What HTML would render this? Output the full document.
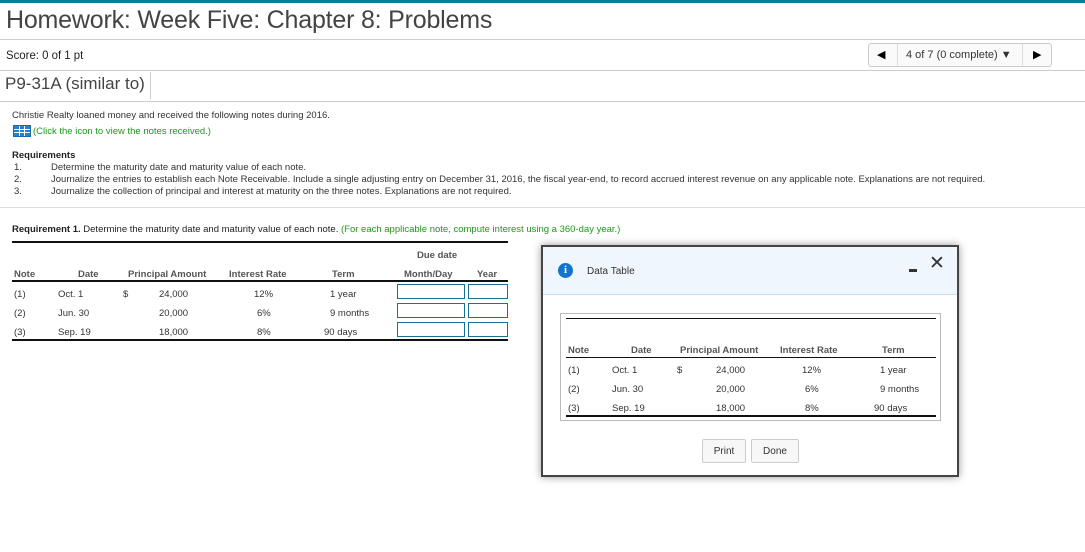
<!DOCTYPE html>
<html><head><style>
*{margin:0;padding:0;box-sizing:border-box}
body{width:1085px;height:552px;background:#fff;font-family:"Liberation Sans",Arial,sans-serif;color:#333;position:relative;overflow:hidden}
.a{position:absolute;white-space:nowrap}
.s{font-size:9.5px}
.hl{position:absolute;height:1px;background:#c8cdd8}
.bl{position:absolute;height:2px;background:#111}
.in{position:absolute;height:15px;border:1.5px solid #1b6f8f;background:#fff}
.b{font-weight:bold}
.btn{position:absolute;height:24px;border:1px solid #ccc;border-radius:2px;background:#f7f7f7;font-size:10px;display:flex;align-items:center;justify-content:center}
</style></head><body>
<div class="a" style="left:0;top:0;width:1085px;height:3px;background:#0e7ea0"></div>
<div class="a" style="left:6px;top:6px;font-size:25px;color:#444;letter-spacing:-0.2px">Homework: Week Five: Chapter 8: Problems</div>
<div class="hl" style="left:0;top:39px;width:1085px"></div>
<div class="a" style="left:6px;top:48px;font-size:12px;color:#222;transform:scaleX(0.95);transform-origin:left">Score: 0 of 1 pt</div>
<div class="a" style="left:868px;top:43px;width:184px;height:24px;border:1px solid #ccc;border-radius:3px;background:#fafafa"></div>
<div class="a" style="left:897px;top:44px;width:1px;height:22px;background:#ddd"></div>
<div class="a" style="left:1022px;top:44px;width:1px;height:22px;background:#ddd"></div>
<div class="a" style="left:877px;top:48px;font-size:11px;color:#000">◀</div>
<div class="a" style="left:906px;top:49px;font-size:11px;color:#333">4 of 7 (0 complete) ▼</div>
<div class="a" style="left:1033px;top:48px;font-size:11px;color:#000">▶</div>
<div class="hl" style="left:0;top:70px;width:1085px"></div>
<div class="a" style="left:5px;top:74px;font-size:17px;color:#444">P9-31A (similar to)</div>
<div class="a" style="left:150px;top:72px;width:1px;height:27px;background:#ccc"></div>
<div class="hl" style="left:0;top:101px;width:1085px"></div>
<div class="a s" style="left:12px;top:110px">Christie Realty loaned money and received the following notes during 2016.</div>
<div class="a" style="left:13px;top:125px;width:18px;height:12px;background:#2a7fd4;border:1px solid #1f66b0"><svg width="16" height="10" style="position:absolute;left:0;top:0"><g stroke="#fff" stroke-width="1"><line x1="5.5" y1="0" x2="5.5" y2="10"/><line x1="10.5" y1="0" x2="10.5" y2="10"/><line x1="0" y1="3.5" x2="16" y2="3.5"/><line x1="0" y1="6.5" x2="16" y2="6.5"/></g></svg></div>
<div class="a s" style="left:33px;top:126px;color:#1a9a1a">(Click the icon to view the notes received.)</div>
<div class="a s b" style="left:12px;top:150px;color:#222">Requirements</div>
<div class="a s" style="left:14px;top:162px">1.</div><div class="a s" style="left:51px;top:162px">Determine the maturity date and maturity value of each note.</div>
<div class="a s" style="left:14px;top:174px">2.</div><div class="a s" style="left:51px;top:174px">Journalize the entries to establish each Note Receivable. Include a single adjusting entry on December 31, 2016, the fiscal year-end, to record accrued interest revenue on any applicable note. Explanations are not required.</div>
<div class="a s" style="left:14px;top:186px">3.</div><div class="a s" style="left:51px;top:186px">Journalize the collection of principal and interest at maturity on the three notes. Explanations are not required.</div>
<div class="hl" style="left:0;top:207px;width:1085px;background:#ddd"></div>
<div class="a s" style="left:12px;top:224px;color:#222"><b>Requirement 1.</b> Determine the maturity date and maturity value of each note. <span style="color:#1a9a1a">(For each applicable note, compute interest using a 360-day year.)</span></div>
<div class="bl" style="left:12px;top:241px;width:496px"></div>
<div class="a s b" style="left:417px;top:250px;color:#555">Due date</div>
<div class="a s b" style="left:14px;top:269px;color:#555">Note</div>
<div class="a s b" style="left:78px;top:269px;color:#555">Date</div>
<div class="a s b" style="left:128px;top:269px;color:#555">Principal Amount</div>
<div class="a s b" style="left:229px;top:269px;color:#555">Interest Rate</div>
<div class="a s b" style="left:332px;top:269px;color:#555">Term</div>
<div class="a s b" style="left:404px;top:269px;color:#555">Month/Day</div>
<div class="a s b" style="left:477px;top:269px;color:#555">Year</div>
<div class="bl" style="left:12px;top:280px;width:496px;height:1.5px"></div>
<div class="a s" style="left:14px;top:289px">(1)</div><div class="a s" style="left:58px;top:289px">Oct. 1</div><div class="a s" style="left:123px;top:289px">$</div><div class="a s" style="left:159px;top:289px">24,000</div><div class="a s" style="left:254px;top:289px">12%</div><div class="a s" style="left:330px;top:289px">1 year</div>
<div class="a s" style="left:14px;top:308px">(2)</div><div class="a s" style="left:58px;top:308px">Jun. 30</div><div class="a s" style="left:159px;top:308px">20,000</div><div class="a s" style="left:257px;top:308px">6%</div><div class="a s" style="left:330px;top:308px">9 months</div>
<div class="a s" style="left:14px;top:327px">(3)</div><div class="a s" style="left:58px;top:327px">Sep. 19</div><div class="a s" style="left:159px;top:327px">18,000</div><div class="a s" style="left:257px;top:327px">8%</div><div class="a s" style="left:324px;top:327px">90 days</div>
<div class="in" style="left:397px;top:284px;width:68px"></div><div class="in" style="left:468px;top:284px;width:40px"></div>
<div class="in" style="left:397px;top:303px;width:68px"></div><div class="in" style="left:468px;top:303px;width:40px"></div>
<div class="in" style="left:397px;top:322px;width:68px"></div><div class="in" style="left:468px;top:322px;width:40px"></div>
<div class="bl" style="left:12px;top:339px;width:496px;height:1.5px"></div>

<div class="a" style="left:541px;top:245px;width:418px;height:232px;border:2px solid #444;background:#fff;box-shadow:0 0 8px rgba(0,0,0,.4)">
<div class="a" style="left:0;top:0;width:414px;height:48px;background:#f0f6fd;border-bottom:1px solid #bfe0f5"></div>
<div class="a" style="left:15px;top:16px;width:15px;height:15px;border-radius:50%;background:#1274cc;color:#fff;font:bold 11px 'Liberation Serif',serif;text-align:center;line-height:15px">i</div>
<div class="a" style="left:44px;top:19px;font-size:10px;color:#333">Data Table</div>
<div class="a" style="left:366px;top:22px;width:8px;height:3px;background:#333"></div>
<div class="a" style="left:386px;top:5px;font-size:19px;color:#333">✕</div>
<div class="a" style="left:17px;top:66px;width:381px;height:108px;border:1px solid #bbb"></div>
<div class="bl" style="left:23px;top:71px;width:370px;height:1px"></div>
<div class="a s b" style="left:25px;top:98px;color:#555">Note</div>
<div class="a s b" style="left:88px;top:98px;color:#555">Date</div>
<div class="a s b" style="left:137px;top:98px;color:#555">Principal Amount</div>
<div class="a s b" style="left:237px;top:98px;color:#555">Interest Rate</div>
<div class="a s b" style="left:339px;top:98px;color:#555">Term</div>
<div class="bl" style="left:23px;top:110px;width:370px;height:1px"></div>
<div class="a s" style="left:25px;top:118px">(1)</div><div class="a s" style="left:69px;top:118px">Oct. 1</div><div class="a s" style="left:134px;top:118px">$</div><div class="a s" style="left:173px;top:118px">24,000</div><div class="a s" style="left:259px;top:118px">12%</div><div class="a s" style="left:337px;top:118px">1 year</div>
<div class="a s" style="left:25px;top:137px">(2)</div><div class="a s" style="left:69px;top:137px">Jun. 30</div><div class="a s" style="left:173px;top:137px">20,000</div><div class="a s" style="left:262px;top:137px">6%</div><div class="a s" style="left:337px;top:137px">9 months</div>
<div class="a s" style="left:25px;top:156px">(3)</div><div class="a s" style="left:69px;top:156px">Sep. 19</div><div class="a s" style="left:173px;top:156px">18,000</div><div class="a s" style="left:262px;top:156px">8%</div><div class="a s" style="left:331px;top:156px">90 days</div>
<div class="bl" style="left:23px;top:168px;width:370px;height:1.5px"></div>
<div class="btn" style="left:159px;top:192px;width:44px">Print</div>
<div class="btn" style="left:208px;top:192px;width:48px">Done</div>
</div>
</body></html>
